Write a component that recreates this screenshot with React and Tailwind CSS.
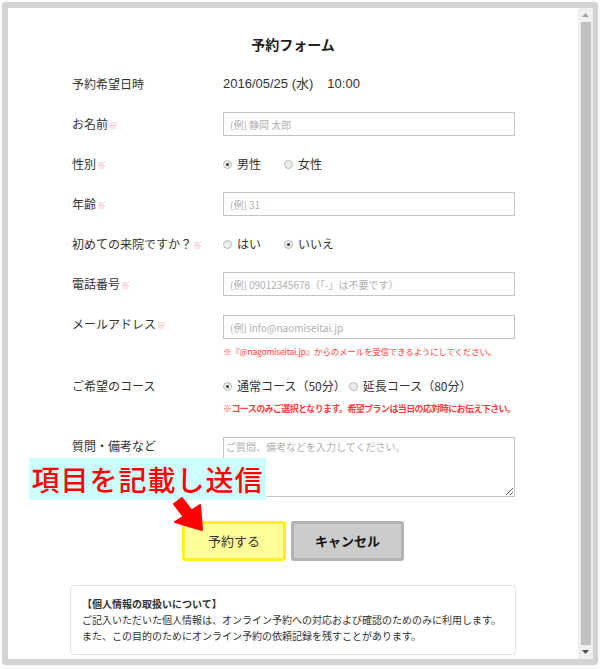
import React from 'react';

const jp = "font-['Noto_Sans_CJK_JP','Liberation_Sans',sans-serif]";

function Req() {
  return <span className="text-[9px] text-[#ff9a9a] ml-[1px]">※</span>;
}

function Radio({ checked, label, className = '' }) {
  return (
    <span className={`flex items-center gap-[5px] ${className}`}>
      <span className="w-[9px] h-[9px] rounded-full border border-[#b9b9b9] bg-[#ececec] flex items-center justify-center shrink-0">
        {checked && <span className="w-[3px] h-[3px] rounded-full bg-[#3a3a3a]" />}
      </span>
      <span>{label}</span>
    </span>
  );
}

function Field({ placeholder }) {
  return (
    <input
      type="text"
      placeholder={placeholder}
      className={`w-[292px] h-[24px] border border-[#c4c4c4] px-[6px] text-[10px] ${jp} placeholder:text-[#b0b0b0] outline-none`}
    />
  );
}

function Row({ label, required, children, className = 'h-[40px] items-center' }) {
  return (
    <div className={`flex ${className}`}>
      <div className="w-[151px] text-[12px] text-[#333]">
        {label}
        {required && <Req />}
      </div>
      <div className="text-[12px] text-[#333]">{children}</div>
    </div>
  );
}

function Scrollbar() {
  return (
    <div className="w-[15px] bg-[#f0f0f0] flex flex-col items-center">
      <div className="h-[14px] flex items-center justify-center">
        <svg width="7" height="4" viewBox="0 0 7 4"><polygon points="3.5,0 7,4 0,4" fill="#a3a3a3" /></svg>
      </div>
      <div className="w-[10px] flex-1 bg-[#c1c1c1]" />
      <div className="h-[14px] flex items-center justify-center">
        <svg width="7" height="4" viewBox="0 0 7 4"><polygon points="0,0 7,0 3.5,4" fill="#505050" /></svg>
      </div>
    </div>
  );
}

export default function App() {
  return (
    <div className={`w-[600px] h-[669px] bg-[#fbfbfb] pt-[2px] pl-[2px] relative ${jp}`}>
      <div className="w-[596px] h-[663px] border-[6px] border-r-[5px] border-[#d3d3d3] rounded-[4px] bg-white flex overflow-hidden">
        <div className="flex-1 pt-[26px]">
          <h1 className="text-[14px] font-bold text-[#222] text-center leading-[20px]">予約フォーム</h1>

          <div className="pl-[64px] mt-[10px]">
            <Row label="予約希望日時">
              <span className="flex gap-[14px] text-[13px] font-['Liberation_Sans','Noto_Sans_CJK_JP',sans-serif]">
                <span>2016/05/25 (水)</span>
                <span>10:00</span>
              </span>
            </Row>
            <Row label="お名前" required>
              <Field placeholder="(例) 静岡 太郎" />
            </Row>
            <Row label="性別" required>
              <div className="flex">
                <Radio checked label="男性" className="w-[61px]" />
                <Radio label="女性" />
              </div>
            </Row>
            <Row label="年齢" required>
              <Field placeholder="(例) 31" />
            </Row>
            <Row label="初めての来院ですか？" required>
              <div className="flex">
                <Radio label="はい" className="w-[61px]" />
                <Radio checked label="いいえ" />
              </div>
            </Row>
            <Row label="電話番号" required>
              <Field placeholder="(例) 09012345678（「-」は不要です）" />
            </Row>
            <Row label="メールアドレス" required className="items-start pt-[11px]">
              <Field placeholder="(例) info@naomiseitai.jp" />
              <p className="mt-[5px] text-[8.5px] leading-[14px] text-[#ff3b3b] tracking-[-0.2px]">
                ※『@nagomiseitai.jp』からのメールを受信できるようにしてください。
              </p>
            </Row>
            <Row label="ご希望のコース" className="items-start mt-[18px] leading-[20px]">
              <div className="flex h-[20px] items-center">
                <Radio checked label="通常コース（50分）" className="mr-[3px]" />
                <Radio label="延長コース（80分）" />
              </div>
              <p className="mt-[6px] text-[9px] leading-[14px] font-bold text-[#ff3b3b] tracking-[-0.6px]">
                ※コースのみご選択となります。希望プランは当日の応対時にお伝え下さい。
              </p>
            </Row>
            <Row label="質問・備考など" className="items-start mt-[21px]">
              <textarea
                placeholder="ご質問、備考などを入力してください。"
                className={`block w-[292px] h-[60px] border border-[#c4c4c4] px-[2px] py-[1px] text-[10px] ${jp} placeholder:text-[#b0b0b0] outline-none`}
              />
            </Row>
          </div>

          <div className="flex justify-center gap-[5px] mt-[24px]">
            <button className="w-[104px] h-[40px] bg-[#ffff99] border-[3px] border-[#ffee22] rounded-[3px] text-[13px] text-[#333]">
              予約する
            </button>
            <button className="w-[113px] h-[40px] bg-[#cccccc] border-[3px] border-[#b3b3b3] rounded-[3px] text-[13px] font-bold text-[#111]">
              キャンセル
            </button>
          </div>

          <div className="ml-[62px] mt-[24px] w-[446px] h-[70px] border border-[#e3e3e3] rounded-[4px] px-[11px] pt-[10px] text-[10px] leading-[16px] text-[#333]">
            <p className="font-bold">【個人情報の取扱いについて】</p>
            <p>ご記入いただいた個人情報は、オンライン予約への対応および確認のためのみに利用します。</p>
            <p>また、この目的のためにオンライン予約の依頼記録を残すことがあります。</p>
          </div>
        </div>
        <Scrollbar />
      </div>

      {/* callout over the form */}
      <div className="absolute left-[29px] top-[458px] w-[237px] h-[42px] bg-[#ccffff] flex items-center justify-center text-[28px] font-medium text-[#ff0000] tracking-[1px]">
        項目を記載し送信
      </div>
      <svg className="absolute left-[160px] top-[490px]" width="50" height="50" viewBox="0 0 50 50">
        <polygon
          points="14,14 23.5,26.5 15,32 42,40 40,15 31.5,20.5 22,8"
          fill="#ff0000"
          stroke="#ff0000"
          strokeWidth="2"
          strokeLinejoin="round"
        />
      </svg>
    </div>
  );
}
